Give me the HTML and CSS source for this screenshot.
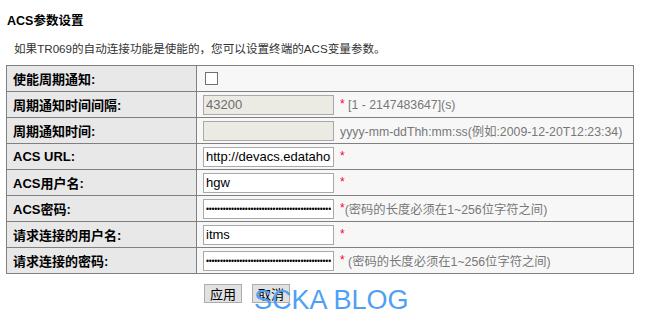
FILE: index.html
```html
<!DOCTYPE html>
<html>
<head>
<meta charset="utf-8">
<link rel="stylesheet" href="styles.css">
</head>
<body>
<div class="page">
  <h1 class="title">ACS参数设置</h1>
  <p class="desc">如果TR069的自动连接功能是使能的，您可以设置终端的ACS变量参数。</p>
  <table class="form">
    <tr>
      <td class="label">使能周期通知:</td>
      <td class="value"><div class="cell"><span class="check"></span></div></td>
    </tr>
    <tr>
      <td class="label">周期通知时间间隔:</td>
      <td class="value"><div class="cell"><input class="field disabled" type="text" value="43200" disabled><span class="star">*</span><span class="hint">&nbsp;[1 - 2147483647](s)</span></div></td>
    </tr>
    <tr>
      <td class="label">周期通知时间:</td>
      <td class="value"><div class="cell"><input class="field disabled" type="text" value="" disabled><span class="hint gap">yyyy-mm-ddThh:mm:ss(例如:2009-12-20T12:23:34)</span></div></td>
    </tr>
    <tr>
      <td class="label">ACS URL:</td>
      <td class="value"><div class="cell"><input class="field" type="text" value="http://devacs.edatahome.com:9090/ACS-server/ACS"><span class="star">*</span></div></td>
    </tr>
    <tr>
      <td class="label">ACS用户名:</td>
      <td class="value"><div class="cell"><input class="field" type="text" value="hgw"><span class="star">*</span></div></td>
    </tr>
    <tr>
      <td class="label">ACS密码:</td>
      <td class="value"><div class="cell"><input class="field pwd" type="password" value="aaaaaaaaaaaaaaaaaaaaaaaaaaaaaaaaaaaaaaaaaaaaaaaaaaaa"><span class="star">*</span><span class="hint">(密码的长度必须在1~256位字符之间)</span></div></td>
    </tr>
    <tr>
      <td class="label">请求连接的用户名:</td>
      <td class="value"><div class="cell"><input class="field" type="text" value="itms"><span class="star">*</span></div></td>
    </tr>
    <tr>
      <td class="label">请求连接的密码:</td>
      <td class="value"><div class="cell"><input class="field pwd" type="password" value="aaaaaaaaaaaaaaaaaaaaaaaaaaaaaaaaaaaaaaaaaaaaaaaaaaaa"><span class="star">*</span><span class="hint">&nbsp;(密码的长度必须在1~256位字符之间)</span></div></td>
    </tr>
  </table>
  <div class="actions">
    <button class="btn" type="button">应用</button>
    <button class="btn" type="button">取消</button>
  </div>
  <div class="watermark">SCKA BLOG</div>
</div>
</body>
</html>
```

FILE: styles.css
```css
html, body {
  margin: 0;
  padding: 0;
  background: #ffffff;
}
body {
  font-family: "Liberation Sans", Arial, "Noto Sans CJK SC", sans-serif;
  color: #000;
}
.page {
  position: relative;
  width: 651px;
  height: 314px;
  padding: 13px 0 0 6px;
  box-sizing: border-box;
}
.title {
  margin: 0 0 0 1px;
  font-size: 12.5px;
  font-weight: bold;
  line-height: 16px;
}
.desc {
  margin: 12px 0 0 8px;
  font-size: 11.6px;
  line-height: 15px;
  color: #333;
}
.form {
  margin-top: 9px;
  width: 628px;
  border-collapse: collapse;
  font-size: 12px;
}
.form td {
  border: 1px solid #808080;
  height: 26px;
  padding: 0;
  box-sizing: border-box;
}
.label {
  width: 190px;
  background: #e8e8e8;
  font-weight: bold;
  font-size: 13px;
  padding-left: 6px !important;
}
.value {
  background: #f7f7f7;
  padding-left: 6px !important;
  white-space: nowrap;
}
.cell {
  display: flex;
  align-items: center;
  height: 24px;
}
.check {
  display: inline-block;
  width: 11px;
  height: 11px;
  border: 1px solid #707070;
  background: #fff;
  margin-left: 2px;
}
.field {
  width: 131px;
  height: 20px;
  box-sizing: border-box;
  border: 1px solid #a9a9a9;
  padding: 0 2px;
  margin: 0;
  font-family: "Liberation Sans", Arial, sans-serif;
  font-size: 13px;
  color: #000;
  background: #fff;
}
.field.disabled {
  background: #ebebe4;
  color: #6d6d6d;
}
.field.pwd {
  font-size: 8.5px;
  letter-spacing: -0.2px;
}
.star {
  color: #ff0033;
  margin-left: 6px;
  font-size: 12px;
  align-self: flex-start;
  padding-top: 4px;
}
.hint {
  color: #787878;
  font-size: 12.3px;
}
.hint.gap {
  margin-left: 6px;
}
.actions {
  display: flex;
  gap: 10px;
  margin: 10px 0 0 198px;
}
.btn {
  height: 19px;
  padding: 0 5px;
  border: 1px solid #adadad;
  background: #e1e1e1;
  font-family: "Noto Sans CJK SC", sans-serif;
  font-size: 13px;
  line-height: 17px;
  color: #000;
  border-radius: 0;
}
.watermark {
  position: absolute;
  left: 254px;
  top: 285px;
  font-family: "Liberation Sans", Arial, sans-serif;
  font-size: 27px;
  line-height: 30px;
  color: #4f9ff5;
  white-space: nowrap;
}
```
